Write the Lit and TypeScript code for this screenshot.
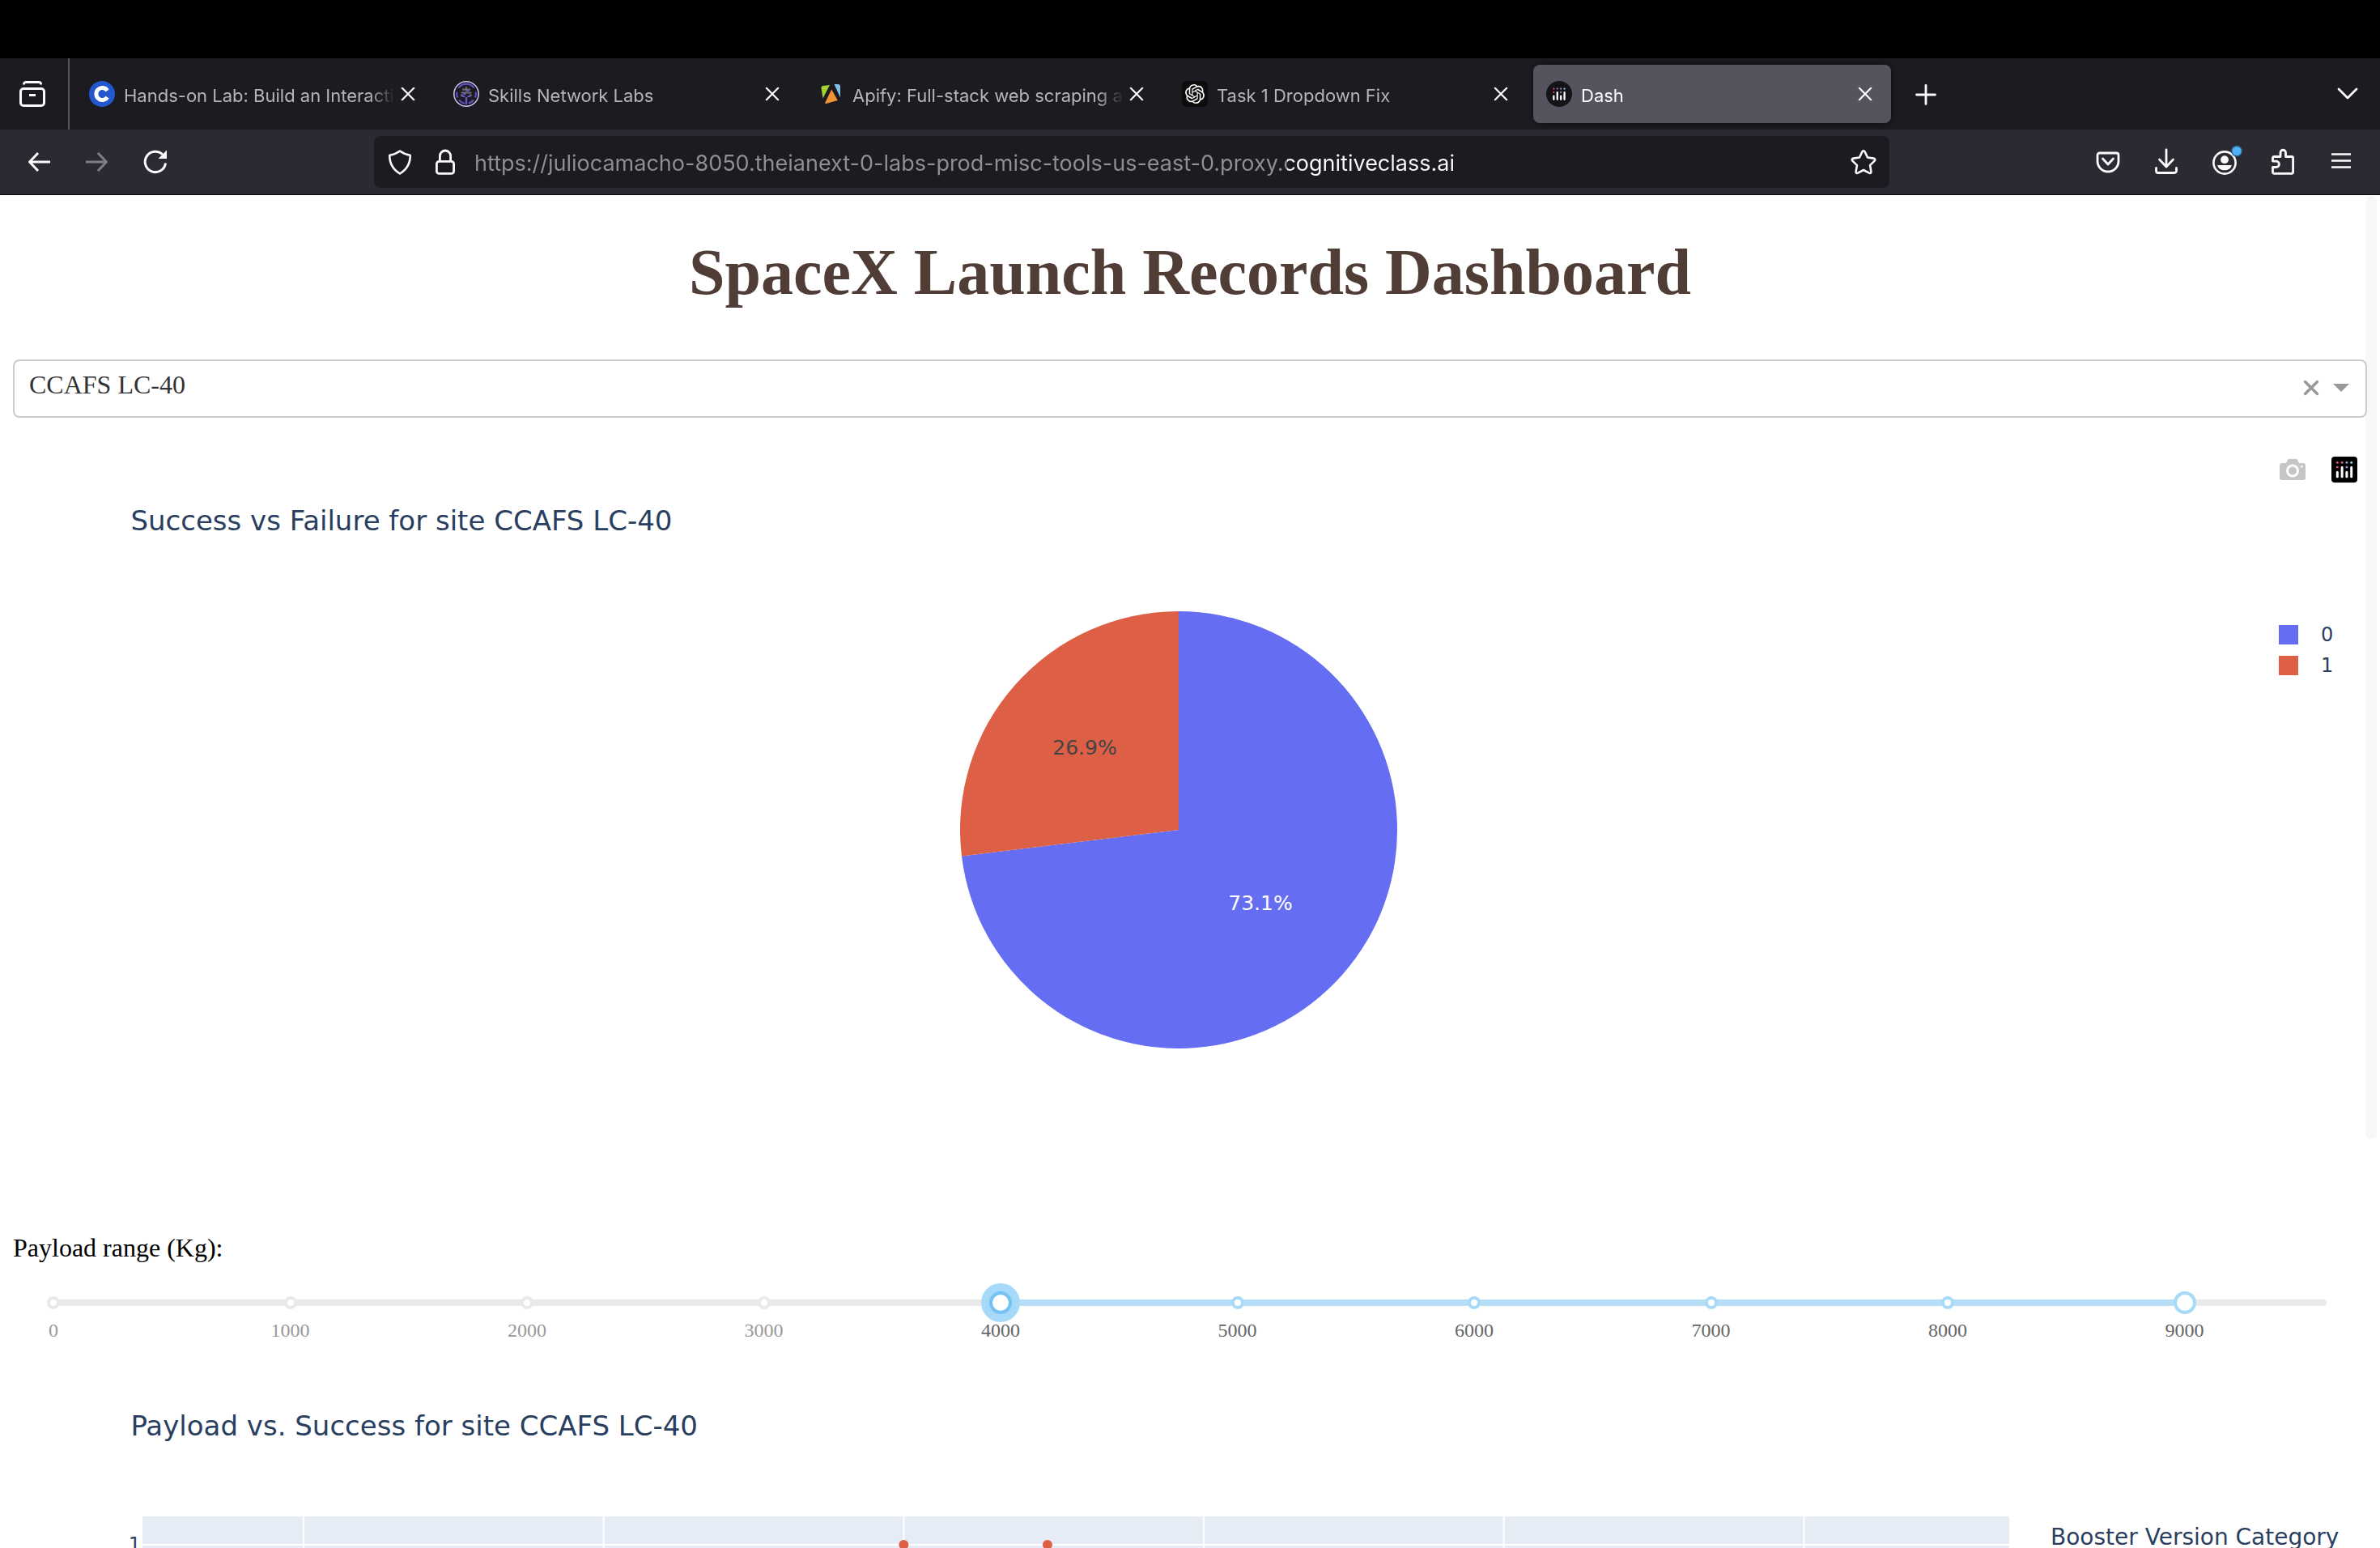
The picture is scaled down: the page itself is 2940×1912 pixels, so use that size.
import { LitElement, html, svg, css, nothing } from "lit";
import { customElement, property, state } from "lit/decorators.js";
import { classMap } from "lit/directives/class-map.js";

const SERIF = css`"Liberation Serif", "Times New Roman", serif`;
const UI = css`Inter, "Liberation Sans", sans-serif`;
const CHART = css`"DejaVu Sans", Verdana, sans-serif`;

const OPENAI =
  "M22.2819 9.8211a5.9847 5.9847 0 0 0-.5157-4.9108 6.0462 6.0462 0 0 0-6.5098-2.9A6.0651 6.0651 0 0 0 4.9807 4.1818a5.9847 5.9847 0 0 0-3.9977 2.9 6.0462 6.0462 0 0 0 .7427 7.0966 5.98 5.98 0 0 0 .511 4.9107 6.051 6.051 0 0 0 6.5146 2.9001A5.9847 5.9847 0 0 0 13.2599 24a6.0557 6.0557 0 0 0 5.7718-4.2058 5.9894 5.9894 0 0 0 3.9977-2.9001 6.0557 6.0557 0 0 0-.7475-7.0729zm-9.022 12.6081a4.4755 4.4755 0 0 1-2.8764-1.0408l.1419-.0804 4.7783-2.7582a.7948.7948 0 0 0 .3927-.6813v-6.7369l2.02 1.1686a.071.071 0 0 1 .038.052v5.5826a4.504 4.504 0 0 1-4.4945 4.4944zm-9.6607-4.1254a4.4708 4.4708 0 0 1-.5346-3.0137l.142.0852 4.783 2.7582a.7712.7712 0 0 0 .7806 0l5.8428-3.3685v2.3324a.0804.0804 0 0 1-.0332.0615L9.74 19.9502a4.4992 4.4992 0 0 1-6.1408-1.6464zM2.3408 7.8956a4.485 4.485 0 0 1 2.3655-1.9728V11.6a.7664.7664 0 0 0 .3879.6765l5.8144 3.3543-2.0201 1.1685a.0757.0757 0 0 1-.071 0l-4.8303-2.7865A4.504 4.504 0 0 1 2.3408 7.872zm16.5963 3.8558L13.1038 8.364 15.1192 7.2a.0757.0757 0 0 1 .071 0l4.8303 2.7913a4.4944 4.4944 0 0 1-.6765 8.1042v-5.6772a.79.79 0 0 0-.407-.667zm2.0107-3.0231l-.142-.0852-4.7735-2.7818a.7759.7759 0 0 0-.7854 0L9.409 9.2297V6.8974a.0662.0662 0 0 1 .0284-.0615l4.8303-2.7866a4.4992 4.4992 0 0 1 6.6802 4.66zM8.3065 12.863l-2.02-1.1638a.0804.0804 0 0 1-.038-.0567V6.0742a4.4992 4.4992 0 0 1 7.3757-3.4537l-.142.0805L8.704 5.459a.7948.7948 0 0 0-.3927.6813zm1.0976-2.3654l2.602-1.4998 2.6069 1.4998v2.9994l-2.5974 1.4997-2.6067-1.4997Z";

const plotlyBars = svg`
  <circle cx="7.3" cy="7.3" r="1.5" fill="#e8476c"/>
  <circle cx="7.3" cy="13" r="1.5" fill="#e8476c"/>
  <circle cx="13.1" cy="7.3" r="1.5" fill="#c9659f"/>
  <circle cx="18.9" cy="7.3" r="1.5" fill="#a98bc4"/>
  <circle cx="18.9" cy="13" r="1.5" fill="#a98bc4"/>
  <circle cx="24.7" cy="7.3" r="1.5" fill="#8bd8ec"/>
  <path d="M7.3 19.2v5.5M13.1 13.2v11.5M18.9 19.2v5.5M24.7 13.2v11.5" stroke="#fff" stroke-width="3" stroke-linecap="round"/>`;

const icons: Record<string, unknown> = {
  stash: svg`<g fill="none" stroke="#fbfbfe" stroke-width="3"><rect x="1.5" y="9.5" width="29" height="21" rx="3.5"/><path d="M5.5 4.500v-.5a2.500 2.500 0 0 1 2.500-2.500h16a2.500 2.500 0 0 1 2.500 2.500v.5"/><path d="M12 17.500h8"/></g>`,
  back: svg`<path d="M15 5 4.500 16 15 27M5 16h25" fill="none" stroke="#fbfbfe" stroke-width="3" stroke-linejoin="round"/>`,
  forward: svg`<path d="M17 5 27.500 16 17 27M27 16H2" fill="none" stroke="#7f7e86" stroke-width="3" stroke-linejoin="round"/>`,
  reload: svg`<path d="M28.500 17.500A12.700 12.700 0 1 1 24.800 6.800" fill="none" stroke="#fbfbfe" stroke-width="3"/><path d="M30 1.500v10.500H19.500z" fill="#fbfbfe"/>`,
  shield: svg`<path d="M16 2.500c4 3 8 4.500 12.700 5.200C29 18 24 25.500 16 30.500 8 25.500 3 18 3.300 7.700 8 7 12 5.500 16 2.500z" fill="none" stroke="#fbfbfe" stroke-width="2.600" stroke-linejoin="round"/>`,
  lock: svg`<g fill="none" stroke="#fbfbfe" stroke-width="2.800"><rect x="5.400" y="15.400" width="21.200" height="15" rx="3"/><path d="M9.400 15V8.600a6.600 6.600 0 0 1 13.200 0V15"/></g>`,
  star: svg`<path d="M16 2.200c.8 0 1.300.5 1.700 1.300l3.300 7 7.600 1.100c1.700.3 2.200 1.900 1 3.100l-5.500 5.500 1.300 7.700c.2 1.600-1 2.600-2.500 1.800L16 26l-6.900 3.700c-1.500.8-2.800-.2-2.500-1.800l1.300-7.700-5.500-5.500c-1.200-1.200-.7-2.800 1-3.100L11 10.500l3.300-7c.4-.8.9-1.300 1.700-1.300z" fill="none" stroke="#fbfbfe" stroke-width="2.600" stroke-linejoin="round"/>`,
  pocket: svg`<path d="M5.500 5h21A2.500 2.500 0 0 1 29 7.500V15a13 13 0 0 1-26 0V7.500A2.500 2.500 0 0 1 5.500 5zM9.500 12l6.500 7 6.500-7" fill="none" stroke="#fbfbfe" stroke-width="2.800" stroke-linecap="round" stroke-linejoin="round"/>`,
  download: svg`<path d="M16 1v20M7.500 13l8.500 9 8.500-9M3.500 23.500v3.500a2.500 2.500 0 0 0 2.500 2.500h20a2.500 2.500 0 0 0 2.500-2.500v-3.500" fill="none" stroke="#fbfbfe" stroke-width="2.800" stroke-linecap="round" stroke-linejoin="round"/>`,
  account: svg`<circle cx="16" cy="17" r="13.600" fill="none" stroke="#fbfbfe" stroke-width="2.600"/><circle cx="16" cy="13.200" r="4.900" fill="#fbfbfe"/><path d="M7.200 20h17.600c-.8 4-4.300 6.300-8.800 6.300S8 24 7.200 20z" fill="#fbfbfe"/><circle cx="31" cy="2.500" r="7" fill="#2b5e84"/><circle cx="31" cy="2.500" r="5.600" fill="#4fb0f3"/>`,
  puzzle: svg`<path d="M13 9.500V4.500a3 3 0 0 1 6.500 0v5H27A1.700 1.700 0 0 1 28.600 11.200v17.300A1.700 1.700 0 0 1 27 30.300H5.200A1.700 1.700 0 0 1 3.500 28.500v-6h4.200a3.700 3.700 0 0 0 0-7.400H3.500v-4A1.700 1.700 0 0 1 5.200 9.500z" fill="none" stroke="#fbfbfe" stroke-width="2.800" stroke-linejoin="round"/>`,
  menu: svg`<path d="M4 6.500h24M4 14.500h24M4 22.500h24" stroke="#fbfbfe" stroke-width="2.600"/>`,
  plus: svg`<path d="M15 5.500v23M3.500 17h23" stroke="#fbfbfe" stroke-width="2.800" stroke-linecap="round"/>`,
  chevron: svg`<path d="M5 10l11 11 11-11" fill="none" stroke="#fbfbfe" stroke-width="2.800" stroke-linecap="round" stroke-linejoin="round"/>`,
  close: svg`<path d="M8.800 8.800l14.400 14.400M23.200 8.800L8.800 23.200" stroke="#fbfbfe" stroke-width="2.200" stroke-linecap="round"/>`,
  coursera: svg`<circle cx="16" cy="16" r="16" fill="#2257cf"/><path d="M22.600 11.800a7.500 7.500 0 1 0 0 8.400" fill="none" stroke="#fff" stroke-width="5"/>`,
  skills: svg`<g fill="none"><circle cx="16" cy="16" r="15.200" stroke="#cfc6ee" stroke-width="1.500"/><path d="M14 27.800a12 12 0 0 1-7-4.300M25 23.500a12 12 0 0 1-6 4M5 20.500a12 12 0 0 1-.6-7M27 20.500a12 12 0 0 0 .6-7M6.500 8.500a12 12 0 0 1 19 0" stroke="#6a52cc" stroke-width="2"/><path d="M16 7v6M11 10.500h10M9.500 14.500h13M9 18.500l3-2M23 18.500l-3-2" stroke="#6d6b75" stroke-width="1.800"/><path d="M16 20v9" stroke="#6a52cc" stroke-width="2.400"/></g><path d="M10.500 18h4v2h-4zM17.500 18h3.500v2h-3.500zM12.500 15h3v2h-3zM17 11h2.500v2H17z" fill="#6a52cc"/>`,
  apify: svg`<path d="M4.500 8.500Q4.300 6.300 6.500 6L15 5 6.500 21.500z" fill="#a4d233"/><path d="M20.500 4h4.500q3 0 3 3v13.500z" fill="#7fc0e4"/><path d="M17.200 10.500 24.800 24 10.500 28q-1.500.2-1.200-1.200z" fill="#f39434"/>`,
  openai: svg`<rect width="32" height="32" rx="6" fill="#0d0d0d"/><g transform="translate(4 4)"><path d=${OPENAI} fill="#fff"/></g>`,
  dash: svg`<circle cx="16" cy="16" r="16" fill="#141318"/><g transform="translate(3.800 4)scale(.76)">${plotlyBars}</g>`,
  plotly: svg`<rect width="32" height="32" rx="4" fill="#000"/>${plotlyBars}`,
  camera: svg`<path fill-rule="evenodd" d="M3 8h5l2-4q.5-1 1.500-1h9q1 0 1.500 1l2 4H29a3 3 0 0 1 3 3v15a3 3 0 0 1-3 3H3a3 3 0 0 1-3-3V11a3 3 0 0 1 3-3zM16 9.500a8 8 0 1 0 0 16 8 8 0 0 0 0-16zM27.500 11a1.300 1.300 0 1 0 0 2.600 1.300 1.300 0 0 0 0-2.600z" fill="#c6c6c6"/><circle cx="16" cy="17.500" r="5" fill="#c6c6c6"/>`,
  clear: svg`<path d="M8.500 7.500l15 15M23.500 7.500l-15 15" stroke="#999" stroke-width="3.400" stroke-linecap="round"/>`,
  caret: svg`<path d="M6 10h20L16 20z" fill="#999"/>`,
};

const icon = (name: string) =>
  html`<svg width="32" height="32" viewBox="0 0 32 32" overflow="visible" aria-hidden="true">${icons[name]}</svg>`;

const reset = css`
  :host {
    display: block;
  }
  *,
  *::before {
    box-sizing: border-box;
  }
  svg {
    display: block;
    flex: none;
  }
  button {
    display: flex;
    align-items: center;
    justify-content: center;
    margin: 0;
    padding: 0;
    border: 0;
    background: none;
    cursor: pointer;
  }
`;

interface Tab {
  title: string;
  icon: string;
}

@customElement("browser-chrome")
class BrowserChrome extends LitElement {
  @state() private active = 4;

  private tabs: Tab[] = [
    { title: "Hands-on Lab: Build an Interactive", icon: "coursera" },
    { title: "Skills Network Labs", icon: "skills" },
    { title: "Apify: Full-stack web scraping and", icon: "apify" },
    { title: "Task 1 Dropdown Fix", icon: "openai" },
    { title: "Dash", icon: "dash" },
  ];

  static styles = [
    reset,
    css`
      :host {
        font-family: ${UI};
      }
      .menubar {
        height: 72px;
        background: #000;
      }
      .strip {
        display: flex;
        align-items: center;
        height: 88px;
        background: #1c1b22;
      }
      .stash {
        width: 86px;
        height: 88px;
        padding-right: 4px;
        border-right: 2px solid #55545c;
      }
      .tabs {
        display: flex;
        flex: 0 1 2250px;
        min-width: 0;
        margin-left: 4px;
      }
      .tab {
        display: flex;
        flex: 1 1 0;
        align-items: center;
        min-width: 0;
        height: 72px;
        margin: 0 4px;
        padding: 0 16px;
        border-radius: 8px;
      }
      .tab.active {
        background: #55535d;
        box-shadow: 0 0 6px rgb(0 0 0 / 60%);
      }
      .title {
        flex: 1;
        justify-content: flex-start;
        min-width: 0;
        height: 72px;
        margin-left: 11px;
        padding-top: 3px;
        color: #b4b4b9;
        font: 22px/32px ${UI};
        white-space: nowrap;
        overflow: hidden;
        -webkit-mask: linear-gradient(to left, transparent, #000 32px);
        mask: linear-gradient(to left, transparent, #000 32px);
      }
      .active .title {
        color: #fbfbfe;
      }
      .close {
        width: 32px;
      }
      .new {
        width: 80px;
        height: 72px;
      }
      .all {
        width: 80px;
        height: 72px;
        margin-left: auto;
      }
      .bar {
        display: flex;
        align-items: center;
        height: 81px;
        padding: 0 12px;
        background: #2b2a33;
        border-bottom: 1px solid #0c0c0d;
      }
      .tool {
        width: 72px;
        height: 64px;
      }
      .space {
        flex: 1;
        padding: 0 2px;
      }
      .address {
        display: flex;
        flex: 8;
        align-items: center;
        height: 64px;
        padding: 0 16px;
        border-radius: 8px;
        background: #1c1b22;
      }
      .glyph + .glyph {
        margin-left: 24px;
      }
      .url {
        flex: 1;
        min-width: 0;
        height: 48px;
        margin: 0 20px;
        padding: 2px 0 0;
        border: 0;
        outline: 0;
        font: 27px/46px ${UI};
        color: transparent;
        background: linear-gradient(to right, #8f8f94 1004px, #fbfbfe 1004px);
        -webkit-background-clip: text;
        background-clip: text;
      }
    `,
  ];

  private tool(name: string, label: string) {
    return html`<button class="tool" aria-label=${label}>${icon(name)}</button>`;
  }

  render() {
    return html`
      <div class="menubar"></div>
      <div class="strip">
        <button class="stash" aria-label="Tab groups">${icon("stash")}</button>
        <div class="tabs">
          ${this.tabs.map(
            (t, i) => html`
              <div class=${classMap({ tab: true, active: i === this.active })}>
                ${icon(t.icon)}
                <button class="title" @click=${() => (this.active = i)}>${t.title}</button>
                <button class="close" aria-label="Close tab">${icon("close")}</button>
              </div>
            `
          )}
        </div>
        <button class="new" aria-label="New tab">${icon("plus")}</button>
        <button class="all" aria-label="List all tabs">${icon("chevron")}</button>
      </div>
      <div class="bar">
        ${this.tool("back", "Back")} ${this.tool("forward", "Forward")} ${this.tool("reload", "Reload")}
        <div class="space"></div>
        <div class="address">
          <button class="glyph" aria-label="Tracking protection">${icon("shield")}</button>
          <button class="glyph" aria-label="Connection security">${icon("lock")}</button>
          <input
            class="url"
            aria-label="Address"
            spellcheck="false"
            value="https://juliocamacho-8050.theianext-0-labs-prod-misc-tools-us-east-0.proxy.cognitiveclass.ai"
          />
          <button class="glyph" aria-label="Bookmark">${icon("star")}</button>
        </div>
        <div class="space"></div>
        ${this.tool("pocket", "Save")} ${this.tool("download", "Downloads")} ${this.tool("account", "Account")}
        ${this.tool("puzzle", "Extensions")} ${this.tool("menu", "Menu")}
      </div>
    `;
  }
}

@customElement("chart-frame")
class ChartFrame extends LitElement {
  @property() heading = "";
  @property({ type: Boolean }) tools = false;

  static styles = [
    reset,
    css`
      :host {
        height: 900px;
        font-family: ${CHART};
        color: #2a3f5f;
      }
      .head {
        display: flex;
        align-items: flex-start;
        justify-content: space-between;
        height: 200px;
        padding: 0 12px 0 5%;
      }
      .heading {
        margin: 0;
        padding-top: 68px;
        font: 34px/40px ${CHART};
      }
      .tools {
        display: flex;
        gap: 32px;
        padding-top: 9px;
      }
    `,
  ];

  render() {
    return html`
      <div class="head">
        <h2 class="heading">${this.heading}</h2>
        ${this.tools
          ? html`<div class="tools">
              <button aria-label="Download plot as a png">${icon("camera")}</button>
              <button aria-label="Produced with Plotly">${icon("plotly")}</button>
            </div>`
          : nothing}
      </div>
      <slot></slot>
    `;
  }
}

@customElement("pie-chart")
class PieChart extends LitElement {
  private slices = [
    { name: "0", value: 19, color: "#656ef2", ink: "#fff", x: 371, y: 369 },
    { name: "1", value: 7, color: "#dd5f46", ink: "#444", x: 154, y: 177 },
  ];

  static styles = [
    reset,
    css`
      .body {
        display: grid;
        grid-template-columns: 160px 1fr 188px;
        font: 24px/38px ${CHART};
        color: #2a3f5f;
      }
      .pie {
        grid-column: 2;
        justify-self: center;
        font-size: 25px;
      }
      .legend {
        margin: 0;
        padding: 10px 0 0 79px;
        list-style: none;
      }
      .entry {
        display: flex;
        align-items: center;
        gap: 28px;
        height: 38px;
      }
    `,
  ];

  render() {
    const total = this.slices.reduce((s, d) => s + d.value, 0);
    const at = (f: number) => {
      const a = f * 2 * Math.PI;
      return `${270 + 270 * Math.sin(a)} ${270 - 270 * Math.cos(a)}`;
    };
    let start = 0;
    const parts = this.slices.map((d) => {
      const share = d.value / total;
      const path = `M270 270L${at(start)}A270 270 0 ${share > 0.5 ? 1 : 0} 1 ${at(start + share)}Z`;
      start += share;
      return svg`<path d=${path} fill=${d.color}></path>
        <text x=${d.x} y=${d.y} text-anchor="middle" fill=${d.ink}>${(share * 100).toFixed(1)}%</text>`;
    });
    return html`
      <div class="body">
        <svg class="pie" width="540" height="540" viewBox="0 0 540 540">${parts}</svg>
        <ul class="legend">
          ${this.slices.map(
            (d) => html`<li class="entry">
              <svg width="24" height="24"><rect width="24" height="24" fill=${d.color}></rect></svg>
              <span>${d.name}</span>
            </li>`
          )}
        </ul>
      </div>
    `;
  }
}

@customElement("range-slider")
class RangeSlider extends LitElement {
  @state() private low = 4000;
  @state() private high = 9000;
  private max = 9600;

  static styles = [
    reset,
    css`
      .slider {
        display: grid;
        margin: 0 50px;
      }
      .slider > * {
        grid-area: 1 / 1;
      }
      .rail {
        height: 8px;
        margin-top: 20px;
        border-radius: 6px;
        background: #e9e9e9;
      }
      .span {
        height: 8px;
        background: #b6dff7;
      }
      .ticks {
        display: grid;
        grid-template-columns: repeat(10, calc(100% / 9.6));
        width: 100%;
        margin: 16px 0 0 calc(-100% / 19.2);
      }
      .tick {
        display: grid;
        justify-items: center;
        gap: 12px;
        color: #999;
        font: 24px/28px ${SERIF};
      }
      .tick::before {
        content: "";
        width: 16px;
        height: 16px;
        border: 4px solid #e9e9e9;
        border-radius: 50%;
        background: #fff;
      }
      .tick.on {
        color: #666;
      }
      .tick.on::before {
        border-color: #a6daf8;
      }
      .thumb {
        appearance: none;
        height: 48px;
        margin: 0 -14px;
        background: none;
        outline: 0;
        pointer-events: none;
      }
      .thumb::-webkit-slider-thumb {
        appearance: none;
        box-sizing: border-box;
        width: 28px;
        height: 28px;
        border: 4px solid #a6daf8;
        border-radius: 50%;
        background: #fff;
        pointer-events: auto;
      }
      .thumb.held::-webkit-slider-thumb {
        border-color: #74c3f4;
        box-shadow: 0 0 0 10px #a6daf8;
      }
    `,
  ];

  render() {
    const pct = (v: number) => (v / this.max) * 100;
    return html`
      <div class="slider">
        <div class="rail">
          <div
            class="span"
            style="margin-left:${pct(this.low)}%;width:${pct(this.high - this.low)}%"
          ></div>
        </div>
        <div class="ticks">
          ${Array.from({ length: 10 }, (_, i) => i * 1000).map(
            (v) => html`<span class=${classMap({ tick: true, on: v >= this.low && v <= this.high })}>${v}</span>`
          )}
        </div>
        <input
          class="thumb held"
          type="range"
          aria-label="Minimum payload"
          min="0"
          max=${this.max}
          step="100"
          .value=${String(this.low)}
          @input=${(e: Event) => (this.low = Number((e.target as HTMLInputElement).value))}
        />
        <input
          class="thumb"
          type="range"
          aria-label="Maximum payload"
          min="0"
          max=${this.max}
          step="100"
          .value=${String(this.high)}
          @input=${(e: Event) => (this.high = Number((e.target as HTMLInputElement).value))}
        />
      </div>
    `;
  }
}

@customElement("scatter-chart")
class ScatterChart extends LitElement {
  private gridX = [8.63, 24.7, 40.78, 56.85, 72.92, 89];
  private points = [40.78, 48.48];

  static styles = [
    reset,
    css`
      .body {
        display: grid;
        grid-template-columns: 158px 1fr 391px;
        color: #2a3f5f;
        font: 24px/28px ${CHART};
      }
      .axis {
        padding-top: 21px;
        text-align: right;
      }
      .plot {
        width: calc(100% - 53px);
        height: 540px;
        margin-left: 2px;
        background: #e5ecf6;
      }
      .legend {
        padding-top: 10px;
        font-size: 28px;
        line-height: 32px;
      }
    `,
  ];

  render() {
    return html`
      <div class="body">
        <div class="axis">1</div>
        <svg class="plot">
          ${this.gridX.map((x) => svg`<line x1="${x}%" x2="${x}%" y1="0" y2="540" stroke="#fff" stroke-width="2"></line>`)}
          <line x1="0" x2="100%" y1="35" y2="35" stroke="#fff" stroke-width="2"></line>
          ${this.points.map((x) => svg`<circle cx="${x}%" cy="35" r="6" fill="#dd5f46"></circle>`)}
        </svg>
        <div class="legend">Booster Version Category</div>
      </div>
    `;
  }
}

@customElement("app-root")
class AppRoot extends LitElement {
  @state() private site = "CCAFS LC-40";
  private sites = ["All Sites", "CCAFS LC-40", "CCAFS SLC-40", "KSC LC-39A", "VAFB SLC-4E"];

  static styles = [
    reset,
    css`
      :host {
        height: 100vh;
        overflow: hidden;
        background: #fff;
      }
      .page {
        position: relative;
        padding: 0 16px;
        font: 32px/36px ${SERIF};
        color: #000;
      }
      .track {
        position: absolute;
        top: 1px;
        right: 4px;
        width: 14px;
        height: 1165px;
        border-radius: 8px;
        background: #f7f7f7;
      }
      .title {
        margin: 0;
        padding: 49px 0 62px;
        color: #503d36;
        font: bold 80px/92px ${SERIF};
        text-align: center;
      }
      .picker {
        position: relative;
        display: grid;
        align-items: center;
      }
      .picker > * {
        grid-area: 1 / 1;
      }
      .site {
        appearance: none;
        width: 100%;
        height: 72px;
        margin: 0;
        padding: 0 100px 10px 18px;
        border: 2px solid #ccc;
        border-radius: 8px;
        background: #fff;
        color: #333;
        font: 32px/36px ${SERIF};
      }
      .marks {
        display: flex;
        gap: 5px;
        justify-self: end;
        padding-right: 16px;
      }
      .chart {
        margin-top: 39px;
      }
      .range {
        margin: 68px 0 0;
      }
      .payload {
        margin-top: 26px;
      }
      .scatter {
        margin-top: 16px;
      }
    `,
  ];

  render() {
    return html`
      <browser-chrome></browser-chrome>
      <main class="page">
        <div class="track"></div>
        <h1 class="title">SpaceX Launch Records Dashboard</h1>
        <div class="picker">
          <select
            class="site"
            aria-label="Launch site"
            @change=${(e: Event) => (this.site = (e.target as HTMLSelectElement).value)}
          >
            ${this.sites.map((s) => html`<option ?selected=${s === this.site}>${s}</option>`)}
          </select>
          <div class="marks">
            <button aria-label="Clear value">${icon("clear")}</button>
            ${icon("caret")}
          </div>
        </div>
        <chart-frame class="chart" tools heading="Success vs Failure for site ${this.site}">
          <pie-chart></pie-chart>
        </chart-frame>
        <p class="range">Payload range (Kg):</p>
        <range-slider class="payload"></range-slider>
        <chart-frame class="scatter" heading="Payload vs. Success for site ${this.site}">
          <scatter-chart></scatter-chart>
        </chart-frame>
      </main>
    `;
  }
}
